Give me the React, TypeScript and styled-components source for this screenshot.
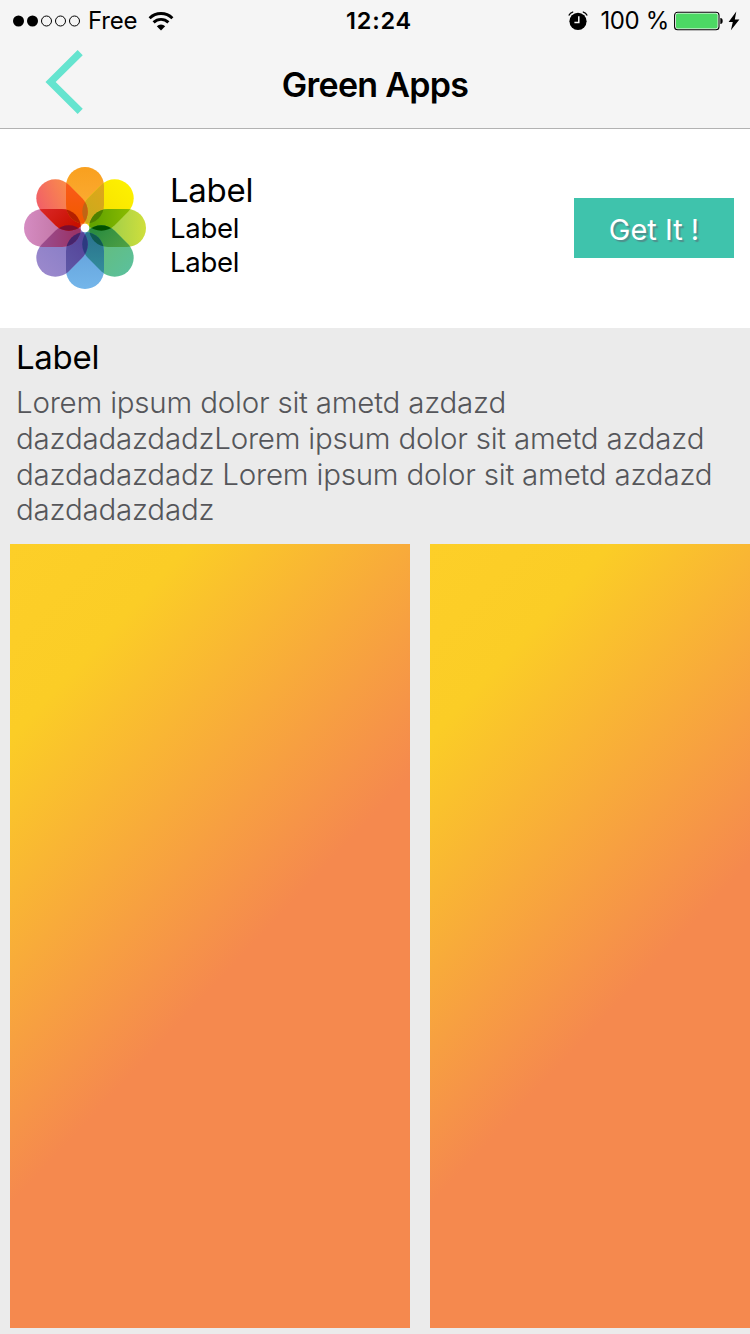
import React from "react";
import styled, { createGlobalStyle } from "styled-components";

const GlobalStyle = createGlobalStyle`
  * { box-sizing: border-box; }
  body { margin: 0; background: #ebebeb; font-family: Inter, "Liberation Sans", sans-serif; color: #000; }
`;

const Screen = styled.div`
  width: 750px;
  height: 1334px;
  overflow: hidden;
  background: #ebebeb;
  display: flex;
  flex-direction: column;
`;

const Header = styled.header`
  height: 129px;
  flex: none;
  background: #f5f5f5;
  border-bottom: 1px solid #b2b2b2;
`;

const StatusBar = styled.div`
  height: 41px;
  display: grid;
  grid-template-columns: 1fr auto 1fr;
  align-items: center;
  padding: 1px 10px 0 12px;
  font-size: 24px;
  line-height: 40px;
`;

const StatusGroup = styled.div<{ $end?: boolean }>`
  display: flex;
  align-items: center;
  justify-content: ${(p) => (p.$end ? "flex-end" : "flex-start")};
`;

const StatusText = styled.span<{ $spacing: number; $left: number; $right: number }>`
  letter-spacing: ${(p) => p.$spacing}px;
  margin: 0 ${(p) => p.$right}px 0 ${(p) => p.$left}px;
  white-space: nowrap;
`;

const Clock = styled.span`
  font-size: 23.5px;
  font-weight: 600;
  letter-spacing: 0.8px;
  padding-left: 6px;
`;

const NavBar = styled.nav`
  height: 87px;
  display: grid;
  grid-template-columns: 1fr auto 1fr;
  align-items: center;
`;

const BackButton = styled.button`
  border: 0;
  background: none;
  padding: 0 0 6px 45px;
  height: 72px;
  display: flex;
  align-items: center;
`;

const Title = styled.h1`
  margin: 0;
  font-size: 34px;
  line-height: 87px;
  font-weight: 600;
  letter-spacing: -0.7px;
`;

const AppRow = styled.section`
  height: 199px;
  flex: none;
  background: #fff;
  display: flex;
  align-items: center;
  padding: 0 16px 1px 24px;
`;

const AppInfo = styled.div`
  flex: 1;
  margin-left: 24px;
  padding-bottom: 9px;
`;

const AppName = styled.div`
  font-size: 33px;
  line-height: 42px;
  letter-spacing: -0.3px;
`;

const AppDetail = styled.div`
  font-size: 27.5px;
  line-height: 34px;
  letter-spacing: -0.3px;
`;

const GetButton = styled.button`
  width: 160px;
  height: 60px;
  border: 0;
  background: #3fc3ac;
  color: #fff;
  font: 400 29px/60px Inter, "Liberation Sans", sans-serif;
  padding: 2px 0 0;
  text-shadow: 2px 2px 1px rgba(90, 110, 120, 0.6);
`;

const Description = styled.section`
  height: 216px;
  flex: none;
  padding: 8px 16px 0;
`;

const SectionTitle = styled.h2`
  margin: 0;
  font-size: 33px;
  font-weight: 400;
  line-height: 42px;
  letter-spacing: -0.3px;
`;

const Body = styled.p`
  margin: 7px 0 0;
  color: #55565a;
  font-size: 29.5px;
  font-weight: 300;
  line-height: 35.8px;
  letter-spacing: -0.21px;
  white-space: nowrap;
`;

const Gallery = styled.div`
  display: flex;
  gap: 20px;
  padding-left: 10px;
`;

const Shot = styled.div`
  width: 400px;
  height: 784px;
  flex: none;
  background: linear-gradient(133deg, #fdcf28 0%, #fbcd26 16%, #f5894e 54.5%, #f5894e 100%);
`;

/* Clockwise from the top petal. */
const PETALS = [
  ["#f9a01f", "#fcb03a"],
  ["#fdf000", "#f6dc00"],
  ["#cfdf3c", "#86c552"],
  ["#5cc09a", "#66bb70"],
  ["#74b6ea", "#5f9bd6"],
  ["#9a88cc", "#8179c4"],
  ["#d58cc2", "#b86a96"],
  ["#f0596c", "#fb9445"],
];

/* Where a petal crosses the next one. */
const OVERLAPS = [
  ["#e3a51a", "#cbab1c"],
  ["#8fbe00", "#62a300"],
  ["#56a444", "#2b8c40"],
  ["#35909c", "#2b7590"],
  ["#5f5aa8", "#56459a"],
  ["#9a5296", "#9a3468"],
  ["#dc2a2c", "#c81000"],
  ["#fb5a1e", "#f25a00"],
];

/* Where the two neighbours of a petal meet on its axis. */
const LENSES = ["#c06414", "#4f8000", "#005000", "#0f5a50", "#2c3a80", "#46246c", "#7c0c2e", "#b42000"];

const Petal = ({ index, fill }: { index: number; fill: string }) => (
  <rect x="-19" y="-61" width="38" height="57" rx="19" fill={fill} transform={`rotate(${index * 45})`} />
);

const PhotosIcon = () => (
  <svg width="122" height="122" viewBox="-61 -61 122 122">
    <defs>
      {PETALS.map(([outer, inner], i) => (
        <linearGradient key={i} id={`petal${i}`} x1="0" y1="0" x2={i === 7 ? 1 : 0} y2={i === 7 ? 0.6 : 1}>
          <stop offset="0" stopColor={outer} />
          <stop offset="1" stopColor={inner} />
        </linearGradient>
      ))}
      {OVERLAPS.map(([outer, inner], i) => (
        <linearGradient key={i} id={`overlap${i}`} x1="0" y1="0.2" x2="0" y2="0.9">
          <stop offset="0" stopColor={outer} />
          <stop offset="1" stopColor={inner} />
        </linearGradient>
      ))}
      {PETALS.map((_, i) => (
        <clipPath key={i} id={`clip${i}`}>
          <rect x="-19" y="-61" width="38" height="57" rx="19" transform={`rotate(${i * 45})`} />
        </clipPath>
      ))}
    </defs>
    {PETALS.map((_, i) => (
      <Petal key={i} index={i} fill={`url(#petal${i})`} />
    ))}
    {OVERLAPS.map((_, i) => (
      <g key={i} clipPath={`url(#clip${i})`}>
        <Petal index={(i + 1) % 8} fill={`url(#overlap${i})`} />
      </g>
    ))}
    {LENSES.map((color, i) => (
      <g key={i} clipPath={`url(#clip${(i + 7) % 8})`}>
        <Petal index={(i + 1) % 8} fill={color} />
      </g>
    ))}
    <circle r="4.2" fill="#fff" />
  </svg>
);

const SignalDots = () => (
  <svg width="70" height="12" viewBox="0 0 70 12">
    {[0, 1, 2, 3, 4].map((i) => (
      <circle key={i} cx={6.5 + i * 14} cy="6" r={i < 2 ? 5.5 : 5} fill={i < 2 ? "#000" : "none"} stroke="#000" strokeWidth={i < 2 ? 0 : 1} />
    ))}
  </svg>
);

const WifiIcon = () => (
  <svg width="26" height="19" viewBox="0 0 26 19" fill="none" stroke="#000" strokeWidth="2.9">
    <path d="M1.6 6.2a16.2 16.2 0 0 1 22.8 0" />
    <path d="M5.6 10.4a10.5 10.5 0 0 1 14.8 0" />
    <path d="M8.8 14.2a6 6 0 0 1 8.4 0L13 18.5z" fill="#000" stroke="none" />
  </svg>
);

const AlarmIcon = () => (
  <svg width="20" height="20" viewBox="0 0 20 20">
    <circle cx="10" cy="10.3" r="8.6" />
    <path d="M0.8 4.6Q2 1.6 5.2 0.9M19.2 4.6Q18 1.6 14.8 0.9" fill="none" stroke="#000" strokeWidth="1.3" />
    <path d="M10.8 5.2v6.2H6.4" fill="none" stroke="#f5f5f5" strokeWidth="1.5" />
  </svg>
);

const BatteryIcon = () => (
  <svg width="50" height="20" viewBox="0 0 50 20">
    <rect x="0.6" y="1.2" width="44.4" height="17.6" rx="3" fill="#fff" stroke="#000" strokeWidth="1.1" />
    <rect x="2" y="2.6" width="41.6" height="14.8" rx="1.6" fill="#4cd964" />
    <path d="M46.3 7q2.4 0 2.4 3t-2.4 3z" />
  </svg>
);

const BoltIcon = () => (
  <svg width="12" height="20" viewBox="0 0 12 20">
    <path d="M8.3 0.6 0.6 11h4.2L2.9 19.2 11.4 8.6H6.8z" />
  </svg>
);

const PowerGroup = styled.span`
  display: flex;
  align-items: center;
  gap: 4px;
`;

const BackIcon = () => (
  <svg width="39" height="64" viewBox="0 0 39 64" fill="none" stroke="#65e4cf" strokeWidth="7.2">
    <path d="M35.2 2.6 5.6 32 35.2 61.4" />
  </svg>
);

export default function App() {
  return (
    <>
      <GlobalStyle />
      <Screen>
        <Header>
          <StatusBar>
            <StatusGroup>
              <SignalDots />
              <StatusText $spacing={-0.2} $left={6} $right={11}>Free</StatusText>
              <WifiIcon />
            </StatusGroup>
            <Clock>12:24</Clock>
            <StatusGroup $end>
              <AlarmIcon />
              <StatusText $spacing={-0.35} $left={12} $right={5}>100 %</StatusText>
              <PowerGroup>
                <BatteryIcon />
                <BoltIcon />
              </PowerGroup>
            </StatusGroup>
          </StatusBar>
          <NavBar>
            <BackButton aria-label="Back"><BackIcon /></BackButton>
            <Title>Green Apps</Title>
          </NavBar>
        </Header>
        <AppRow>
          <PhotosIcon />
          <AppInfo>
            <AppName>Label</AppName>
            <AppDetail>Label</AppDetail>
            <AppDetail>Label</AppDetail>
          </AppInfo>
          <GetButton>Get It !</GetButton>
        </AppRow>
        <Description>
          <SectionTitle>Label</SectionTitle>
          <Body>
            Lorem ipsum dolor sit ametd azdazd<br />
            dazdadazdadzLorem ipsum dolor sit ametd azdazd<br />
            dazdadazdadz Lorem ipsum dolor sit ametd azdazd<br />
            dazdadazdadz
          </Body>
        </Description>
        <Gallery>
          <Shot />
          <Shot />
        </Gallery>
      </Screen>
    </>
  );
}
